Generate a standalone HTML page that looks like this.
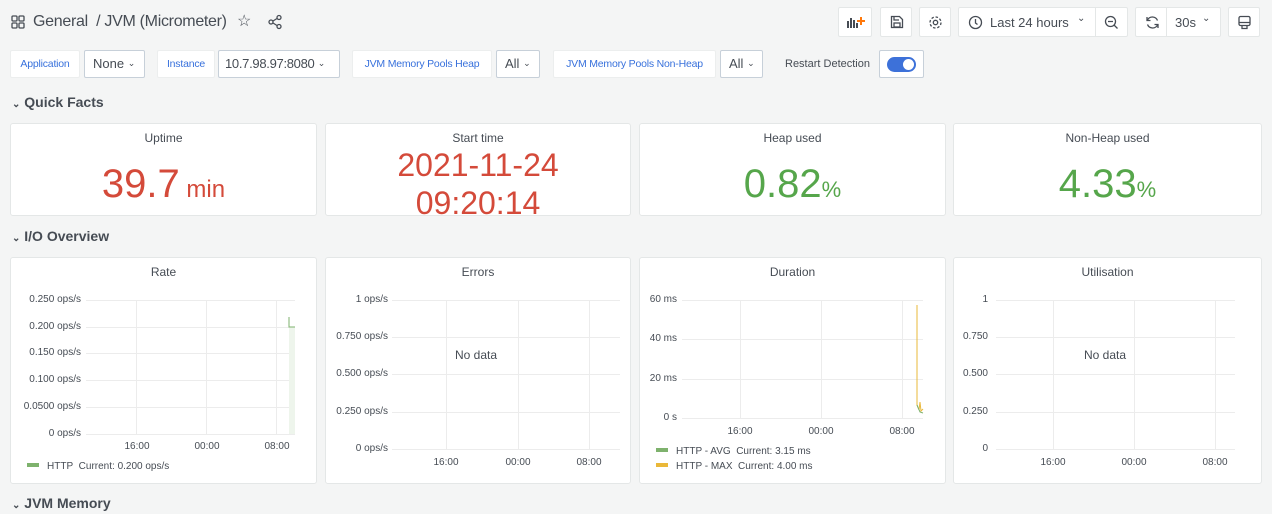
<!DOCTYPE html>
<html><head><meta charset="utf-8"><style>
*{box-sizing:border-box;margin:0;padding:0}
body{width:1272px;height:514px;background:#f4f5f5;font-family:"Liberation Sans",sans-serif;color:#464c54;position:relative;overflow:hidden}
.a{position:absolute;white-space:nowrap}
.btn{position:absolute;background:#fff;border:1px solid #e4e7e7;border-radius:2px;height:30px;top:7px}
.lbl{position:absolute;top:50px;height:28px;background:#fff;border:1px solid #eceeee;border-radius:2px;color:#3871dc;font-size:10.5px;line-height:26px;padding:0 0;text-align:center;white-space:nowrap;overflow:hidden;letter-spacing:-0.2px}
.sel{position:absolute;top:50px;height:28px;background:#fff;border:1px solid #c7d0d9;border-radius:2px;font-size:13px;line-height:26px;padding:0 8px;color:#464c54;white-space:nowrap;overflow:hidden}
.panel{position:absolute;background:#fff;border:1px solid #e4e7e7;border-radius:3px}
.pt{position:absolute;left:0;right:0;top:7px;text-align:center;font-size:12px;color:#464c54;font-weight:500}
.row{position:absolute;left:12px;font-size:14px;font-weight:bold;color:#464c54}
.big{position:absolute;left:0;right:0;text-align:center;font-weight:500}
.yl{position:absolute;font-size:10px;color:#464c54;text-align:right;width:80px}
.xl{position:absolute;font-size:10px;color:#464c54;width:40px;text-align:center}
.hg{position:absolute;height:1px;background:#ececec}
.vg{position:absolute;width:1px;background:#ececec}
.lg{position:absolute;font-size:10px;color:#464c54;white-space:nowrap}
.lg i{display:inline-block;width:12px;height:4px;vertical-align:middle;margin-right:8px;margin-top:-2px}
.nd{position:absolute;font-size:12px;color:#464c54}
.cv{font-size:9px;position:relative;top:-2px}
</style></head><body>
<svg class="a" style="left:11px;top:15px" width="14" height="14" viewBox="0 0 14 14" fill="none" stroke="#464c54" stroke-width="1.3"><rect x="1" y="1" width="5" height="5" rx="1"/><rect x="8" y="1" width="5" height="5" rx="1"/><rect x="1" y="8" width="5" height="5" rx="1"/><rect x="8" y="8" width="5" height="5" rx="1"/></svg>
<div class="a" style="left:33px;top:13px;font-size:16px;color:#464c54;letter-spacing:-0.3px">General&nbsp; / JVM (Micrometer)</div>
<div class="a" style="left:237px;top:11px;font-size:16px">☆</div>
<svg class="a" style="left:267px;top:14px" width="16" height="16" viewBox="0 0 16 16" fill="none" stroke="#464c54" stroke-width="1.3"><circle cx="12" cy="3.5" r="2"/><circle cx="4" cy="8" r="2"/><circle cx="12" cy="12.5" r="2"/><path d="M6 7l4-2.5M6 9l4 2.5"/></svg>
<div class="btn" style="left:838px;width:34px"><svg class="a" style="left:8px;top:7px" width="18" height="14"><g fill="#464c54"><rect x="0" y="6" width="2" height="7"/><rect x="3" y="3" width="2" height="10"/><rect x="6" y="5" width="2" height="8"/><rect x="9" y="8" width="2" height="5"/></g><path d="M14 2v8M10 6h8" stroke="#ff780a" stroke-width="2"/></svg></div>
<div class="btn" style="left:880px;width:32px"><svg class="a" style="left:9px;top:7px" width="14" height="14" fill="none" stroke="#464c54" stroke-width="1.3"><path d="M1.5 1.5h8l3 3v8h-11z"/><rect x="4" y="8" width="6" height="4"/><path d="M4 2v3h5"/></svg></div>
<div class="btn" style="left:919px;width:32px"><svg class="a" style="left:8px;top:7px" width="15" height="15" fill="none" stroke="#464c54" stroke-width="1.3"><circle cx="7.5" cy="7.5" r="2.2"/><circle cx="7.5" cy="7.5" r="5.5" stroke-dasharray="2.5 1.8"/></svg></div>
<div class="btn" style="left:958px;width:170px"><svg class="a" style="left:9px;top:7px" width="15" height="15" fill="none" stroke="#464c54" stroke-width="1.3"><circle cx="7.5" cy="7.5" r="6"/><path d="M7.5 4v4l2 1.5"/></svg><span class="a" style="left:31px;top:7px;font-size:13px">Last 24 hours</span><span class="a" style="left:118px;top:5px;font-size:10px">⌄</span><div class="a" style="left:136px;top:0;width:1px;height:28px;background:#e4e7e7"></div><svg class="a" style="left:145px;top:7px" width="15" height="15" fill="none" stroke="#464c54" stroke-width="1.3"><circle cx="6.5" cy="6.5" r="5"/><path d="M4 6.5h5M10 10l3.5 3.5"/></svg></div>
<div class="btn" style="left:1135px;width:86px"><svg class="a" style="left:9px;top:7px" width="15" height="15" fill="none" stroke="#464c54" stroke-width="1.3"><path d="M12.5 5.5A5.5 5.5 0 0 0 2.5 5M2.5 9.5a5.5 5.5 0 0 0 10 .5M2 2v3.5h3.5M13 13V9.5H9.5"/></svg><div class="a" style="left:30px;top:0;width:1px;height:28px;background:#e4e7e7"></div><span class="a" style="left:39px;top:7px;font-size:13px">30s</span><span class="a" style="left:66px;top:5px;font-size:10px">⌄</span></div>
<div class="btn" style="left:1228px;width:32px"><svg class="a" style="left:8px;top:7px" width="15" height="15" fill="none" stroke="#464c54" stroke-width="1.3"><rect x="2" y="1.5" width="11" height="9" rx="1.5"/><path d="M2 7.5h11M5 10.5v3h5v-3"/></svg></div>
<div class="lbl" style="left:10px;width:70px">Application</div>
<div class="sel" style="left:84px;width:61px">None <span class="cv">⌄</span></div>
<div class="lbl" style="left:157px;width:58px">Instance</div>
<div class="sel" style="left:218px;width:122px;padding:0 6px;letter-spacing:-0.3px">10.7.98.97:8080 <span class="cv">⌄</span></div>
<div class="lbl" style="left:352px;width:140px">JVM Memory Pools Heap</div>
<div class="sel" style="left:496px;width:44px">All <span class="cv">⌄</span></div>
<div class="lbl" style="left:553px;width:163px">JVM Memory Pools Non-Heap</div>
<div class="sel" style="left:720px;width:43px">All <span class="cv">⌄</span></div>
<div class="a" style="left:785px;top:58px;font-size:11px;font-weight:500">Restart Detection</div>
<div class="sel" style="left:879px;width:45px;padding:0"><div class="a" style="left:7px;top:6px;width:29px;height:15px;border-radius:8px;background:#3d71d9"></div><div class="a" style="left:23px;top:8px;width:11px;height:11px;border-radius:6px;background:#fff"></div></div>
<div class="row" style="top:94px"><span style="font-size:10px">⌄</span> Quick Facts</div>
<div class="row" style="top:228px"><span style="font-size:10px">⌄</span> I/O Overview</div>
<div class="row" style="top:495px"><span style="font-size:10px">⌄</span> JVM Memory</div>
<div class="panel" style="left:10px;top:123px;width:307px;height:93px"><div class="pt">Uptime</div><div class="big" style="top:38px;color:#d44a3a;font-size:40px">39.7<span style="font-size:24px"> min</span></div></div>
<div class="panel" style="left:325px;top:123px;width:306px;height:93px"><div class="pt">Start time</div><div class="big" style="top:22px;color:#d44a3a;font-size:32px;line-height:38px">2021-11-24<br>09:20:14</div></div>
<div class="panel" style="left:639px;top:123px;width:307px;height:93px"><div class="pt">Heap used</div><div class="big" style="top:38px;color:#56a64b;font-size:40px">0.82<span style="font-size:22px">%</span></div></div>
<div class="panel" style="left:953px;top:123px;width:309px;height:93px"><div class="pt">Non-Heap used</div><div class="big" style="top:38px;color:#56a64b;font-size:40px">4.33<span style="font-size:22px">%</span></div></div>
<div class="panel" style="left:10px;top:257px;width:307px;height:227px"><div class="pt">Rate</div></div>
<div class="panel" style="left:325px;top:257px;width:306px;height:227px"><div class="pt">Errors</div></div>
<div class="panel" style="left:639px;top:257px;width:307px;height:227px"><div class="pt">Duration</div></div>
<div class="panel" style="left:953px;top:257px;width:309px;height:227px"><div class="pt">Utilisation</div></div>
<div class="hg" style="left:86px;width:209px;top:300px"></div><div class="hg" style="left:86px;width:209px;top:327px"></div><div class="hg" style="left:86px;width:209px;top:353px"></div><div class="hg" style="left:86px;width:209px;top:380px"></div><div class="hg" style="left:86px;width:209px;top:407px"></div><div class="hg" style="left:86px;width:209px;top:434px"></div>
<div class="vg" style="left:136px;top:300px;height:134px"></div><div class="vg" style="left:206px;top:300px;height:134px"></div><div class="vg" style="left:276px;top:300px;height:134px"></div>
<div class="yl" style="left:1px;top:294px">0.250 ops/s</div><div class="yl" style="left:1px;top:321px">0.200 ops/s</div><div class="yl" style="left:1px;top:347px">0.150 ops/s</div><div class="yl" style="left:1px;top:374px">0.100 ops/s</div><div class="yl" style="left:1px;top:401px">0.0500 ops/s</div><div class="yl" style="left:1px;top:428px">0 ops/s</div>
<div class="xl" style="left:117px;top:441px">16:00</div><div class="xl" style="left:187px;top:441px">00:00</div><div class="xl" style="left:257px;top:441px">08:00</div>
<div class="a" style="left:289px;top:327px;width:6px;height:107px;background:#eef5ec"></div>
<svg class="a" style="left:286px;top:315px" width="10" height="16"><path d="M3 2v10h6" stroke="#7eb26d" fill="none"/></svg>
<div class="lg" style="left:27px;top:461px"><i style="background:#7eb26d"></i>HTTP&nbsp; Current: 0.200 ops/s</div>
<div class="hg" style="left:392px;width:228px;top:300px"></div><div class="hg" style="left:392px;width:228px;top:337px"></div><div class="hg" style="left:392px;width:228px;top:374px"></div><div class="hg" style="left:392px;width:228px;top:412px"></div><div class="hg" style="left:392px;width:228px;top:449px"></div>
<div class="vg" style="left:446px;top:300px;height:149px"></div><div class="vg" style="left:518px;top:300px;height:149px"></div><div class="vg" style="left:589px;top:300px;height:149px"></div>
<div class="yl" style="left:308px;top:294px">1 ops/s</div><div class="yl" style="left:308px;top:331px">0.750 ops/s</div><div class="yl" style="left:308px;top:368px">0.500 ops/s</div><div class="yl" style="left:308px;top:406px">0.250 ops/s</div><div class="yl" style="left:308px;top:443px">0 ops/s</div>
<div class="xl" style="left:426px;top:457px">16:00</div><div class="xl" style="left:498px;top:457px">00:00</div><div class="xl" style="left:569px;top:457px">08:00</div>
<div class="nd" style="left:455px;top:348px">No data</div>
<div class="hg" style="left:682px;width:241px;top:300px"></div><div class="hg" style="left:682px;width:241px;top:339px"></div><div class="hg" style="left:682px;width:241px;top:379px"></div><div class="hg" style="left:682px;width:241px;top:418px"></div>
<div class="vg" style="left:740px;top:300px;height:118px"></div><div class="vg" style="left:821px;top:300px;height:118px"></div><div class="vg" style="left:902px;top:300px;height:118px"></div>
<div class="yl" style="left:597px;top:294px">60 ms</div><div class="yl" style="left:597px;top:333px">40 ms</div><div class="yl" style="left:597px;top:373px">20 ms</div><div class="yl" style="left:597px;top:412px">0 s</div>
<div class="xl" style="left:720px;top:426px">16:00</div><div class="xl" style="left:801px;top:426px">00:00</div><div class="xl" style="left:882px;top:426px">08:00</div>
<svg class="a" style="left:914px;top:305px" width="10" height="114"><path d="M3 0V100l2 5 1-8 1 9 2-2" stroke="#eab839" fill="none"/><path d="M3 100l3 7 3 1" stroke="#7eb26d" fill="none"/></svg>
<div class="lg" style="left:656px;top:446px"><i style="background:#7eb26d"></i>HTTP - AVG&nbsp; Current: 3.15 ms</div>
<div class="lg" style="left:656px;top:461px"><i style="background:#eab839"></i>HTTP - MAX&nbsp; Current: 4.00 ms</div>
<div class="hg" style="left:996px;width:239px;top:300px"></div><div class="hg" style="left:996px;width:239px;top:337px"></div><div class="hg" style="left:996px;width:239px;top:374px"></div><div class="hg" style="left:996px;width:239px;top:412px"></div><div class="hg" style="left:996px;width:239px;top:449px"></div>
<div class="vg" style="left:1053px;top:300px;height:149px"></div><div class="vg" style="left:1134px;top:300px;height:149px"></div><div class="vg" style="left:1215px;top:300px;height:149px"></div>
<div class="yl" style="left:908px;top:294px">1</div><div class="yl" style="left:908px;top:331px">0.750</div><div class="yl" style="left:908px;top:368px">0.500</div><div class="yl" style="left:908px;top:406px">0.250</div><div class="yl" style="left:908px;top:443px">0</div>
<div class="xl" style="left:1033px;top:457px">16:00</div><div class="xl" style="left:1114px;top:457px">00:00</div><div class="xl" style="left:1195px;top:457px">08:00</div>
<div class="nd" style="left:1084px;top:348px">No data</div>
</body></html>
